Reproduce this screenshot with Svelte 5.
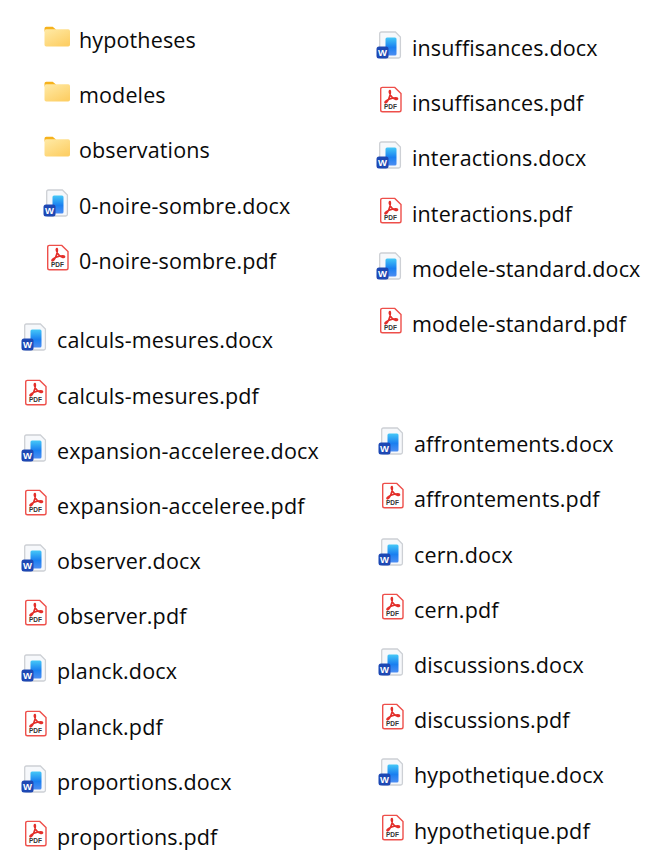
<script>
  const left1 = [['f','hypotheses'],['f','modeles'],['f','observations'],['w','0-noire-sombre.docx'],['p','0-noire-sombre.pdf']];
  const pair = (names) => names.flatMap((n) => [['w', n + '.docx'], ['p', n + '.pdf']]);
  const left2 = pair(['calculs-mesures','expansion-acceleree','observer','planck','proportions']);
  const right1 = pair(['insuffisances','interactions','modele-standard']);
  const right2 = pair(['affrontements','cern','discussions','hypothetique']);
</script>

{#snippet icon(kind)}
  <svg class="icon" viewBox="0 0 28 28" aria-hidden="true">
    {#if kind === 'f'}
      <defs>
        <linearGradient id="fg" x1="0" y1="0" x2="0.7" y2="1">
          <stop offset="0" stop-color="#ffeaa6" />
          <stop offset="1" stop-color="#fdcf66" />
        </linearGradient>
      </defs>
      <path d="M1.500 5.500a1.800 1.800 0 0 1 1.800-1.800h6.400l3.300 2.800v2h-11.500z" fill="#f6b21c" />
      <path d="M1.500 8q0-1.800 1.800-1.800h21.900q1.800 0 1.800 1.800v13.800q0 1.800-1.800 1.800h-21.900q-1.800 0-1.800-1.800z" fill="url(#fg)" />
    {:else if kind === 'w'}
      <defs>
        <linearGradient id="wg" x1="0" y1="0" x2="0" y2="1">
          <stop offset="0" stop-color="#45c8f7" />
          <stop offset="0.55" stop-color="#1a7ff0" />
          <stop offset="1" stop-color="#4d8df2" />
        </linearGradient>
      </defs>
      <path d="M3.700 2.700q0-1.700 1.700-1.700h14l5 5v19.300q0 1.700-1.700 1.700h-17.300q-1.700 0-1.700-1.700z" fill="#f6f8fb" stroke="#cdd0d5" stroke-width="1.300" />
      <rect x="9.500" y="6.500" width="11" height="18" rx="1.500" fill="url(#wg)" />
      <rect x="0.500" y="15.600" width="12" height="12" rx="2.500" fill="#1d48b4" />
      <text x="6.500" y="25" class="wtext">W</text>
    {:else}
      <path d="M4.700 3.200q0-1.800 1.800-1.800h12.300l6.200 6.200v16.300q0 1.800-1.800 1.800h-16.700q-1.800 0-1.800-1.800z" fill="#fff" stroke="#ee4f4a" stroke-width="1.400" />
      <path d="M14 4.500c-1.300 0-.8 3.600 2.200 6.800c2 2.100 5.800 3 5.300 1.200c-.4-1.500-9.400-.4-12.100 3c-1.200 1.500.3 1.800 1.500.5c2.400-2.600 4.300-10.300 3.100-11.500z" fill="none" stroke="#e32f2a" stroke-width="1.600" />
      <text x="14.500" y="23" class="ptext">PDF</text>
    {/if}
  </svg>
{/snippet}

{#snippet group(rows, cls)}
  <ul class={cls}>
    {#each rows as [kind, name]}
      <li>{@render icon(kind)}<span>{name}</span></li>
    {/each}
  </ul>
{/snippet}

<div class="page">
  <div class="col col-left">
    {@render group(left1, 'g-a')}
    {@render group(left2, 'g-b')}
  </div>
  <div class="col col-right">
    {@render group(right1, 'g-c')}
    {@render group(right2, 'g-d')}
  </div>
</div>

<style>
  :global(body) {
    margin: 0;
    background: #fff;
  }
  .page {
    width: 660px;
    height: 864px;
    overflow: hidden;
    display: flex;
    font-family: "Open Sans", "Noto Sans", sans-serif;
    font-size: 21.500px;
    letter-spacing: 0.130px;
    color: #0a0a0a;
  }
  .col {
    display: flex;
    flex-direction: column;
  }
  .col-left {
    width: 355px;
    padding-top: 11.900px;
    gap: 24.400px;
  }
  .col-right {
    padding-top: 20px;
    gap: 65px;
  }
  ul {
    list-style: none;
    margin: 0;
    padding: 0;
  }
  li {
    height: 55.200px;
    display: flex;
    align-items: center;
    gap: 8px;
    white-space: nowrap;
  }
  .icon {
    width: 28px;
    height: 28px;
    flex: none;
    margin-top: -5px;
  }
  .g-a { padding-left: 43px; }
  .g-b { padding-left: 21px; }
  .g-c { padding-left: 21px; }
  .g-d { padding-left: 23px; }
  .wtext {
    font-family: "Liberation Sans", sans-serif;
    font-size: 9.500px;
    font-weight: 700;
    letter-spacing: 0;
    fill: #fff;
    text-anchor: middle;
  }
  .ptext {
    font-family: "Liberation Sans", sans-serif;
    font-size: 6.500px;
    font-weight: 700;
    letter-spacing: 0;
    fill: #333;
    text-anchor: middle;
  }
</style>
